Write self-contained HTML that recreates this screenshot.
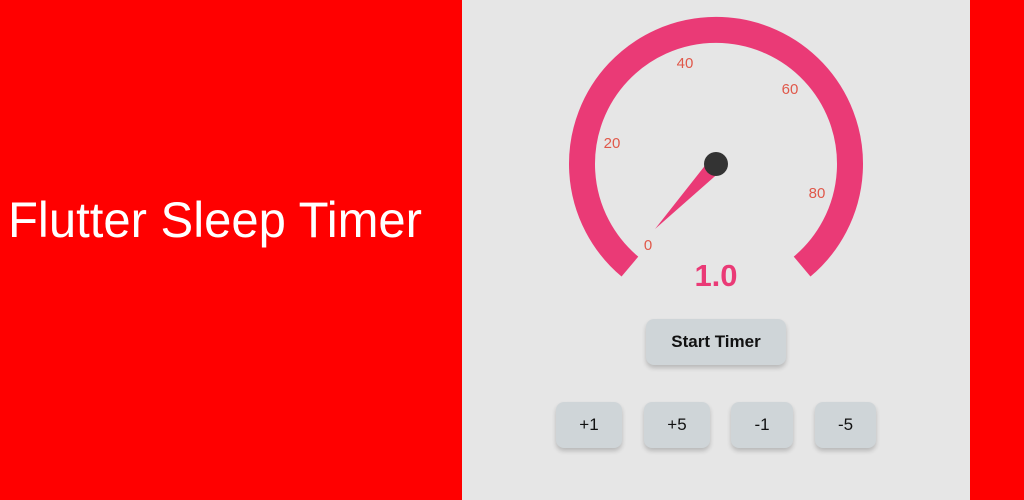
<!DOCTYPE html>
<html><head><meta charset="utf-8"><style>
html,body{margin:0;padding:0;width:1024px;height:500px;overflow:hidden;background:#ff0000;font-family:"Liberation Sans",sans-serif}
.panel{position:absolute;left:462px;top:0;width:508px;height:500px;background:#e6e6e6}
.btn{position:absolute;background:#cfd5d8;border-radius:8px;box-shadow:0 3px 5px rgba(0,0,0,0.2);display:flex;align-items:center;justify-content:center;color:#111;font-size:17px}
</style></head><body>
<svg style="position:absolute;left:0;top:0" width="462" height="500">
<text x="8" y="237" font-family="Liberation Sans, sans-serif" font-size="50" fill="#fff" textLength="414" lengthAdjust="spacingAndGlyphs">Flutter Sleep Timer</text>
</svg>
<div class="panel"></div>
<svg style="position:absolute;left:0;top:0" width="1024" height="500">
<path d="M 629.9 266.6 A 134 134 0 1 1 802.1 266.6" fill="none" stroke="#ea3a76" stroke-width="26"/>
<polygon points="711,158 722,170 655,229" fill="#ea3a76"/>
<circle cx="716" cy="164" r="12" fill="#333"/>
<g font-family="Liberation Sans, sans-serif" font-size="15" fill="#e0584a" text-anchor="middle">
<text x="648" y="250">0</text>
<text x="612" y="148">20</text>
<text x="685" y="68">40</text>
<text x="790" y="94">60</text>
<text x="817" y="198">80</text>
</g>
<text x="716" y="286" font-family="Liberation Sans, sans-serif" font-size="31" font-weight="bold" fill="#ea3a76" text-anchor="middle">1.0</text>
</svg>
<div class="btn" style="left:646px;top:319px;width:140px;height:46px;font-weight:bold">Start Timer</div>
<div class="btn" style="left:556px;top:402px;width:66px;height:46px">+1</div>
<div class="btn" style="left:644px;top:402px;width:66px;height:46px">+5</div>
<div class="btn" style="left:731px;top:402px;width:62px;height:46px">-1</div>
<div class="btn" style="left:815px;top:402px;width:61px;height:46px">-5</div>
</body></html>
